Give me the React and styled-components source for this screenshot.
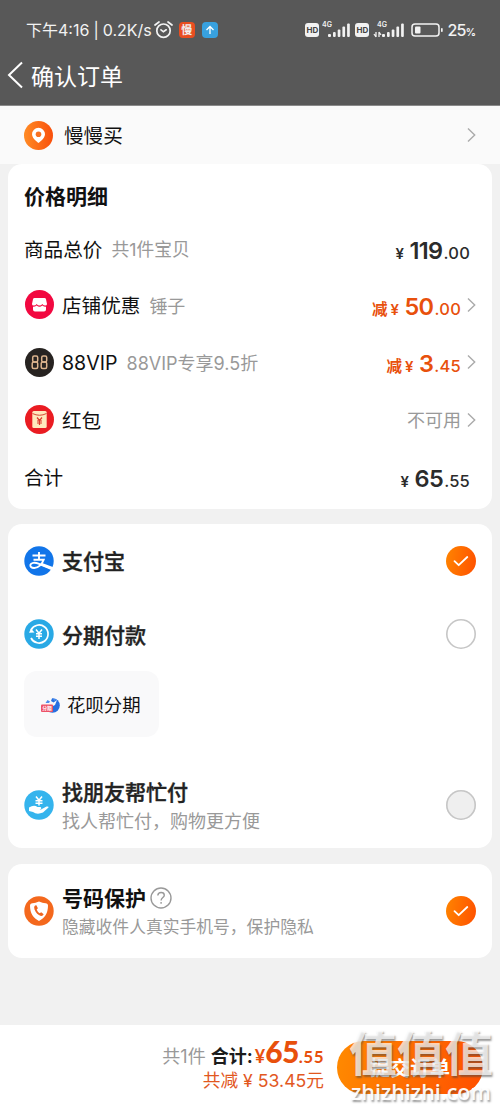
import React from "react";
import styled, { createGlobalStyle, css } from "styled-components";

const GlobalStyle = createGlobalStyle`
  * {
    box-sizing: border-box;
  }
  body {
    margin: 0;
    background: #f1f1f1;
    font-family: Inter, "Noto Sans CJK SC", sans-serif;
    color: #111;
  }
`;

const Page = styled.main`
  width: 500px;
  height: 1111px;
  display: flex;
  flex-direction: column;
  overflow: hidden;
  background: #f1f1f1;
  line-height: 1;
  white-space: nowrap;
`;

const Header = styled.header`
  height: 106px;
  flex: none;
  background: #585858;
  border-bottom: 1px solid #8a8a8a;
  color: #fff;
`;

const StatusBar = styled.div`
  height: 32px;
  margin-top: 14px;
  padding: 0 25px 0 26px;
  display: flex;
  align-items: center;
  justify-content: space-between;
  color: #f2f2f2;
`;

const StatusGroup = styled.div`
  display: flex;
  align-items: center;
`;

const Clock = styled.span`
  font-size: 16px;
  margin-right: ${(p) => p.$gap || "0"};
`;

const AppBadge = styled.span`
  width: 16px;
  height: 16px;
  border-radius: 4px;
  margin-left: ${(p) => p.$gap}px;
  display: flex;
  align-items: center;
  justify-content: center;
  background: ${(p) => p.$color};
  font-size: 11px;
  font-weight: 700;
`;

const HdBadge = styled.span`
  width: 14px;
  height: 14px;
  margin-right: ${(p) => p.$gap}px;
  border-radius: 3px;
  background: #f2f2f2;
  color: #444;
  font: 700 8px/14px Inter, sans-serif;
  text-align: center;
`;

const Battery = styled.span`
  font: 500 16px/1 Inter, sans-serif;
  margin-left: 4px;
  letter-spacing: -0.8px;

  small {
    font-size: 10px;
    font-weight: 700;
  }
`;

const TitleBar = styled.div`
  height: 58px;
  padding-left: 7px;
  display: flex;
  align-items: center;
  gap: 8px;
`;

const Title = styled.h1`
  margin: 0;
  padding-top: 4px;
  font-size: 23px;
  font-weight: 400;
`;

const Address = styled.div`
  height: 58px;
  flex: none;
  padding: 0 24px;
  display: flex;
  align-items: center;
  background: #fafafa;

  svg:first-child {
    margin-right: 11px;
  }
  svg:last-child {
    margin-left: auto;
  }
`;

const Card = styled.section`
  height: ${(p) => p.$height}px;
  flex: none;
  margin: 0 8px ${(p) => p.$gap || 0}px;
  padding: 0 16px;
  border-radius: 14px;
  background: #fff;
`;

const CardTitle = styled.h2`
  height: 62px;
  margin: 0;
  padding-top: 2px;
  display: flex;
  align-items: center;
  font-size: 21px;
  font-weight: 700;
`;

const Row = styled.div`
  height: ${(p) => p.$height || 57.5}px;
  display: flex;
  align-items: center;

  > svg:first-child {
    margin: 0 8px 0 ${(p) => p.$inset || 0}px;
  }
`;

const Breakdown = styled.div`
  padding-top: 4px;
`;

const Label = styled.span`
  padding-top: ${(p) => (p.$strong ? 2 : 4)}px;
  font-size: ${(p) => (p.$strong ? 21 : 19.6)}px;
  font-weight: ${(p) => p.$strong || 400};
  color: ${(p) => (p.$strong === 500 ? "#222" : "#111")};
  -webkit-text-stroke: ${(p) => (p.$strong === 500 ? "0.4px #222" : "0")};
`;

const Note = styled.span`
  margin-left: 9px;
  padding-top: ${(p) => (p.$size ? 1 : 4)}px;
  font-size: ${(p) => p.$size || 18}px;
  color: #999;
`;

const End = styled.div`
  margin-left: auto;
  display: flex;
  align-items: center;
  gap: 6px;
`;

const Money = styled.span`
  display: inline-flex;
  align-items: baseline;
  padding-top: 3px;
  font-family: Inter, "Noto Sans CJK SC", sans-serif;
  font-weight: 600;
  color: ${(p) => (p.$sale ? "#e8500c" : "#2b2b2b")};
  margin-right: ${(p) => (p.$flush ? "6px" : "0")};

  i {
    font: 700 15.5px/1 "Noto Sans CJK SC", sans-serif;
    margin-right: 3px;
  }
  em {
    width: 14px;
    font: 600 15px/1 Inter, sans-serif;
  }
  b {
    font-size: 23.5px;
    font-weight: 600;
    letter-spacing: -0.6px;
  }
  small {
    font-size: 16.5px;
    font-weight: 500;
    margin-left: 1px;
    letter-spacing: 0.2px;
  }
`;

const Unavailable = styled.span`
  padding-top: 3px;
  font-size: 18px;
  color: #999;
`;

const Lines = styled.div`
  display: flex;
  flex-direction: column;
  gap: 10px;
`;

const Heading = styled.div`
  display: flex;
  align-items: center;
  gap: 4px;
`;

const Sub = styled.span`
  font-size: ${(p) => p.$size}px;
  color: #999;
`;

const Check = styled.span`
  width: 30px;
  height: 30px;
  margin-left: auto;
  border-radius: 50%;
  display: flex;
  align-items: center;
  justify-content: center;
  ${(p) =>
    p.$checked
      ? css`
          background: linear-gradient(100deg, #ff8500, #ff5000);
        `
      : css`
          box-shadow: inset 0 0 0 1.6px #c6c6c6;
          background: ${p.$disabled ? "#efefef" : "#fff"};
        `}
`;

const Installment = styled.div`
  width: 135px;
  height: 66px;
  border-radius: 13px;
  background: #f9f9fa;
  display: flex;
  align-items: center;
  padding: 2px 0 0 17px;
  gap: 7px;
  font-size: 18.4px;
`;

const Footer = styled.footer`
  height: 86px;
  flex: none;
  margin-top: auto;
  padding-right: 17px;
  display: flex;
  justify-content: flex-end;
  background: #fff;
`;

const Summary = styled.div`
  display: flex;
  flex-direction: column;
  align-items: flex-end;
  padding-top: 11px;
  margin-right: 13px;
`;

const Total = styled.div`
  height: 30px;
  display: flex;
  align-items: baseline;
  font-size: 18px;
  color: #999;

  strong {
    margin: 0 2px 0 5px;
    font-weight: 700;
    color: #1c1c1c;
  }
  span {
    display: inline-flex;
    align-items: baseline;
    font-family: Lato, sans-serif;
    font-weight: 700;
    color: #e8500c;
  }
  b {
    font-size: 30px;
    letter-spacing: -0.6px;
  }
  small {
    font-size: 17px;
    letter-spacing: 0.5px;
  }
`;

const Saved = styled.div`
  margin-top: 6px;
  font-size: 17.7px;
  color: #e2581f;
`;

const Submit = styled.button`
  position: relative;
  width: 146px;
  height: 53px;
  margin-top: 16px;
  padding: 0;
  border: 0;
  border-radius: 27px;
  background: linear-gradient(100deg, #ff8a00, #ff4f00);
  color: #fff;
  font: 700 20px/53px "Noto Sans CJK SC", sans-serif;
`;

const Stamp = styled.div`
  position: absolute;
  left: 12px;
  top: -16px;
  display: flex;
  flex-direction: column;
  color: rgba(255, 255, 255, 0.74);
  text-shadow: 1px 2px 2px rgba(70, 70, 70, 0.55);
  font: 700 48px/50px "Noto Sans CJK SC", sans-serif;

  small {
    margin-top: 6px;
    font: 600 21.5px/22px "Open Sans", sans-serif;
    color: rgba(255, 255, 255, 0.95);
  }
`;

function Arrow() {
  return (
    <svg width="9" height="16" viewBox="0 0 9 16" fill="none" stroke="#aaa" strokeWidth="1.4">
      <path d="M1 1.5 7.7 8 1 14.5" />
    </svg>
  );
}

function Signal({ data }) {
  return (
    <svg width={data ? 32 : 33} height="19" viewBox={data ? "-3 0 32 19" : "0 0 33 19"} fill="#f2f2f2">
      <text x={data ? 1 : 0} y="6" fontFamily="Inter, sans-serif" fontSize="7" fontWeight="600">
        4G
      </text>
      <rect x="6" y="13" width="3" height="3" rx="1" />
      <rect x="11" y="11" width="2.7" height="5" rx="1" />
      <rect x="15.7" y="8.5" width="2.7" height="7.5" rx="1" />
      <rect x="20.4" y="5.5" width="2.7" height="10.5" rx="1" />
      <rect x="25.1" y="2.5" width="2.7" height="13.5" rx="1" />
      {data && <path d="M0 16v-5M-2 13l2 3M3 11v5M3 11l2 3" stroke="#f2f2f2" strokeWidth="1.3" fill="none" />}
    </svg>
  );
}

function BatteryIcon() {
  return (
    <svg width="38" height="14" viewBox="-6 0 38 14">
      <rect x="1" y="1" width="27" height="12" rx="3" fill="none" stroke="#f2f2f2" strokeWidth="1.5" />
      <rect x="4" y="3.5" width="5.5" height="7" rx="1" fill="#f2f2f2" />
      <rect x="30" y="5" width="1.7" height="4" rx=".8" fill="#f2f2f2" />
    </svg>
  );
}

function AlarmIcon() {
  return (
    <svg width="19" height="18" viewBox="0 0 19 18" fill="none" stroke="#f2f2f2" strokeWidth="1.7" strokeLinecap="round">
      <circle cx="9.5" cy="9.7" r="6.7" />
      <path d="m1 4 4-3M18 4l-4-3M7 8.8l2.4 2 2.8-2" />
    </svg>
  );
}

function ShopIcon() {
  return (
    <svg width="29" height="29" viewBox="0 0 29 29">
      <circle cx="14.5" cy="14.5" r="14.5" fill="#f20840" />
      <path d="M9.5 8h10q1.2 0 1.5 1.200l1 4.800q0 1.500-1.800 1.500T17.300 14q-1 1.500-2.800 1.500T11.700 14q-1 1.500-2.900 1.500T7 14l1-4.800Q8.300 8 9.500 8z" fill="#fff" />
      <path d="M8 16.700q2.200 0 3.700-1.200 1.300 1.200 2.800 1.200t2.800-1.200q1.500 1.200 3.700 1.200v2.800q0 2-2 2h-9q-2 0-2-2z" fill="#fff" />
    </svg>
  );
}

function VipIcon() {
  return (
    <svg width="29" height="29" viewBox="0 0 29 29" fill="none" stroke="#dcb48e" strokeWidth="1.5">
      <circle cx="14.5" cy="14.5" r="14.5" fill="#272321" stroke="none" />
      <rect x="7.7" y="8" width="5" height="6" rx="1.5" />
      <rect x="7.2" y="14" width="5.5" height="6.5" rx="1.5" />
      <rect x="16.700" y="8" width="5" height="6" rx="1.5" />
      <rect x="16.200" y="14" width="5.5" height="6.5" rx="1.5" />
    </svg>
  );
}

function PacketIcon() {
  return (
    <svg width="29" height="29" viewBox="0 0 29 29">
      <circle cx="14.5" cy="14.5" r="14.5" fill="#ea1c22" />
      <rect x="7.3" y="6" width="14.4" height="17" rx="1.5" fill="#ffe9bd" />
      <path d="M7.5 8.500q7 3.500 14 0" stroke="#d84a37" fill="none" />
      <path d="m12 12.500 2.500 3 2.500-3M14.500 15.500v4.500M12 16h5M12 18h5" stroke="#dc3b2e" strokeWidth="1.2" fill="none" />
    </svg>
  );
}

function LocationIcon() {
  return (
    <svg width="29" height="29" viewBox="0 0 29 29">
      <defs>
        <linearGradient id="place">
          <stop stopColor="#ff8b25" />
          <stop offset="1" stopColor="#f94f0b" />
        </linearGradient>
      </defs>
      <circle cx="14.5" cy="14.5" r="14.5" fill="url(#place)" />
      <path d="M14.500 22s-6.500-4.400-6.500-8.700a6.500 6.500 0 0 1 13 0C21 17.600 14.500 22 14.500 22z" fill="#fff" />
      <circle cx="14.5" cy="13.3" r="2.8" fill="#f87020" />
    </svg>
  );
}

function AlipayIcon() {
  return (
    <svg width="30" height="30" viewBox="0 0 30 30" fill="none" stroke="#fff" strokeWidth="1.9">
      <circle cx="15" cy="15" r="14.7" fill="#1175e9" stroke="none" />
      <path d="M8.500 9.500h13M15 6v7.500M9.500 13.700h10.200c-1.500 4-5 8.300-9.500 8.300-3 0-4.200-1.500-3.800-3.200.5-2 4.200-2.800 8-1.200l15 6.200" />
      <path d="m17 18 12 4.500" strokeWidth="2.8" />
    </svg>
  );
}

function SplitPayIcon() {
  return (
    <svg width="30" height="30" viewBox="0 0 30 30" fill="none" stroke="#fff">
      <circle cx="15" cy="15" r="14.7" fill="#29a9e5" stroke="none" />
      <path d="M7 11A9 9 0 1 1 7 19" strokeWidth="1.7" />
      <path d="m5 13.800 5.500-.3-3.500-4z" fill="#fff" stroke="none" />
      <path d="m12 10.500 3 3.700 3-3.700M15 14v6M12 14.700h6M12 17.300h6" strokeWidth="1.5" />
    </svg>
  );
}

function FriendPayIcon() {
  return (
    <svg width="30" height="30" viewBox="0 0 30 30" fill="none" stroke="#fff">
      <circle cx="15" cy="15" r="14.7" fill="#35b4ed" stroke="none" />
      <path d="m12 6.500 3 3.800 3-3.800M15 10v5.500M11.500 10.800h7M11.500 13.300h7" strokeWidth="1.5" />
      <path d="M5 17.500q5-3 8.500-.5h3q2 1.500-1 2.500h-3 4.500l5.500-3q2.500-.5 2 1l-5.500 5Q13 25 9 22l-4-1z" fill="#fff" stroke="none" />
    </svg>
  );
}

function HuabeiIcon() {
  return (
    <svg width="19" height="17" viewBox="0 0 19 17">
      <circle cx="11.5" cy="8.5" r="7.3" fill="#276fe0" />
      <path d="M2 0h9.500L10 4l2.500 1.500L16 3l-2 5-4 2H2z" fill="#f9f9fa" />
      <path d="m4.500 6 2-3 2.500 1.500L8 6zM11.500 1.500l2 2.500L16 2.500z" fill="#4c8deb" />
      <rect x="0" y="7.5" width="12" height="7.5" rx="1" fill="#ed5267" />
      <text x="1.2" y="13.2" fontSize="4.8" fontWeight="700" fill="#fff">
        分期
      </text>
    </svg>
  );
}

function PhoneShieldIcon() {
  return (
    <svg width="30" height="30" viewBox="0 0 30 30">
      <circle cx="15" cy="15" r="14.7" fill="#f4681d" />
      <path d="M15 5.500q4 2 7 1.800 2 .2 2 2.200c0 8-3.500 12.500-9 15.500-5.500-3-9-7.500-9-15.500q0-2 2-2.200 3 .2 7-1.800z" fill="#fff" />
      <path d="M11 9.500q-1.500 1-.5 4 2 5 6.500 6.500 1.800.2 2.700-1.700l-2.500-2-1.500 1q-2-1-3-3.800l1.200-1.200-1.500-3z" fill="#ee651f" />
    </svg>
  );
}

function HelpIcon() {
  return (
    <svg width="22" height="22" viewBox="0 0 22 22" fill="none" stroke="#999" strokeWidth="1.4">
      <circle cx="11" cy="11" r="10" />
      <path d="M7.800 8.500c.2-2 1.500-3 3.300-3s3.200 1 3.200 2.700c0 2.200-3.200 2.500-3.200 5.300M11.100 15v1.800" />
    </svg>
  );
}

function Tick() {
  return (
    <svg width="16" height="12" viewBox="0 0 16 12" fill="none" stroke="#fff" strokeWidth="1.8" strokeLinecap="round" strokeLinejoin="round">
      <path d="m1.500 6.200 4.200 4L14.300 2" />
    </svg>
  );
}

function Price({ whole, cents, sale, flush }) {
  return (
    <Money $sale={sale} $flush={flush}>
      {sale && <i>减</i>}
      <em>¥</em>
      <b>{whole}</b>
      <small>.{cents}</small>
    </Money>
  );
}

const discounts = [
  { icon: <ShopIcon />, label: "店铺优惠", note: "锤子", whole: "50", cents: "00" },
  { icon: <VipIcon />, label: "88VIP", note: "88VIP专享9.5折", whole: "3", cents: "45" },
  { icon: <PacketIcon />, label: "红包" },
];

export default function App() {
  return (
    <>
      <GlobalStyle />
      <Page>
        <Header>
          <StatusBar>
            <StatusGroup>
              <Clock $gap="4px">下午4:16</Clock>
              <Clock $gap="4px">|</Clock>
              <Clock $gap="2px">0.2K/s</Clock>
              <AlarmIcon />
              <AppBadge $gap={6} $color="#e94e20">慢</AppBadge>
              <AppBadge $gap={7} $color="#38a1df">
                <svg width="10" height="10" viewBox="0 0 10 10" fill="none" stroke="#fff" strokeWidth="1.3">
                  <path d="M5 9V1.500M1.500 5 5 1.500 8.500 5" />
                </svg>
              </AppBadge>
            </StatusGroup>
            <StatusGroup>
              <HdBadge $gap={3}>HD</HdBadge>
              <Signal />
              <HdBadge $gap={4}>HD</HdBadge>
              <Signal data />
              <BatteryIcon />
              <Battery>
                25<small>%</small>
              </Battery>
            </StatusGroup>
          </StatusBar>
          <TitleBar>
            <svg width="16" height="28" viewBox="0 0 16 28" fill="none" stroke="#fff" strokeWidth="2">
              <path d="M15 1.500 2 14l13 12.500" />
            </svg>
            <Title>确认订单</Title>
          </TitleBar>
        </Header>

        <Address>
          <LocationIcon />
          <Label>慢慢买</Label>
          <Arrow />
        </Address>

        <Card $height={345} $gap={15}>
          <CardTitle>价格明细</CardTitle>
          <Row $height={46}>
            <Label>商品总价</Label>
            <Note $size={17.8}>共1件宝贝</Note>
            <End>
              <Price whole="119" cents="00" flush />
            </End>
          </Row>
          <Breakdown>
            {discounts.map((item) => (
              <Row key={item.label} $inset={1}>
                {item.icon}
                <Label>{item.label}</Label>
                {item.note && <Note>{item.note}</Note>}
                <End>
                  {item.whole ? (
                    <Price whole={item.whole} cents={item.cents} sale />
                  ) : (
                    <Unavailable>不可用</Unavailable>
                  )}
                  <Arrow />
                </End>
              </Row>
            ))}
            <Row>
              <Label>合计</Label>
              <End>
                <Price whole="65" cents="55" flush />
              </End>
            </Row>
          </Breakdown>
        </Card>

        <Card $height={324} $gap={16}>
          <Row $height={73}>
            <AlipayIcon />
            <Label $strong={500}>支付宝</Label>
            <Check $checked>
              <Tick />
            </Check>
          </Row>
          <Row $height={74}>
            <SplitPayIcon />
            <Label $strong={500}>分期付款</Label>
            <Check />
          </Row>
          <Installment>
            <HuabeiIcon />
            花呗分期
          </Installment>
          <Row $height={136}>
            <FriendPayIcon />
            <Lines>
              <Label $strong={500}>找朋友帮忙付</Label>
              <Sub $size={18}>找人帮忙付，购物更方便</Sub>
            </Lines>
            <Check $disabled />
          </Row>
        </Card>

        <Card $height={94}>
          <Row $height={94}>
            <PhoneShieldIcon />
            <Lines>
              <Heading>
                <Label $strong={700}>号码保护</Label>
                <HelpIcon />
              </Heading>
              <Sub $size={16.8}>隐藏收件人真实手机号，保护隐私</Sub>
            </Lines>
            <Check $checked>
              <Tick />
            </Check>
          </Row>
        </Card>

        <Footer>
          <Summary>
            <Total>
              共1件<strong>合计:</strong>
              <span>
                ¥<b>65</b>
                <small>.55</small>
              </span>
            </Total>
            <Saved>共减 ¥ 53.45元</Saved>
          </Summary>
          <Submit>
            提交订单
            <Stamp>
              值值值
              <small>zhizhizhi.com</small>
            </Stamp>
          </Submit>
        </Footer>
      </Page>
    </>
  );
}
